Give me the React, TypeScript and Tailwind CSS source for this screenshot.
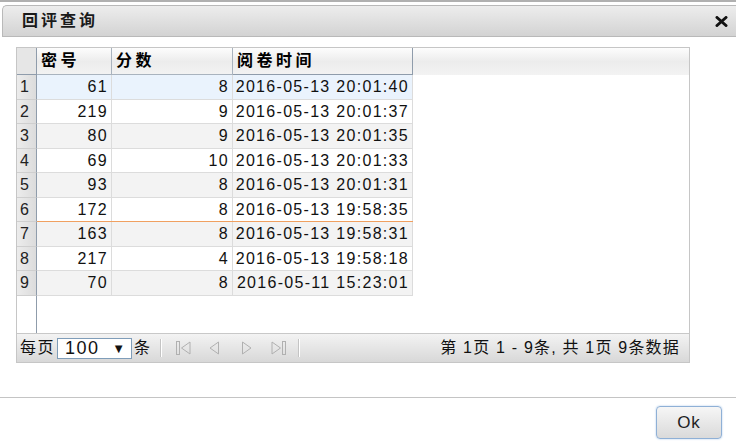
import React from 'react';

const rows = [
  { id: 61, score: 8, time: '2016-05-13 20:01:40' },
  { id: 219, score: 9, time: '2016-05-13 20:01:37' },
  { id: 80, score: 9, time: '2016-05-13 20:01:35' },
  { id: 69, score: 10, time: '2016-05-13 20:01:33' },
  { id: 93, score: 8, time: '2016-05-13 20:01:31' },
  { id: 172, score: 8, time: '2016-05-13 19:58:35' },
  { id: 163, score: 8, time: '2016-05-13 19:58:31' },
  { id: 217, score: 4, time: '2016-05-13 19:58:18' },
  { id: 70, score: 8, time: '2016-05-11 15:23:01' },
];

function CloseIcon() {
  return (
    <svg width="13" height="11" viewBox="0 0 13 11">
      <path d="M2 1.5 L11 9.5 M11 1.5 L2 9.5" stroke="#111" strokeWidth="3" strokeLinecap="round" />
    </svg>
  );
}

function PagerIcon({ kind }: { kind: 'first' | 'prev' | 'next' | 'last' }) {
  const c = '#b0b0b0';
  if (kind === 'first')
    return (
      <svg width="15" height="14" viewBox="0 0 15 14">
        <rect x="0.5" y="0.5" width="3" height="13" fill="none" stroke={c} />
        <path d="M14 1 L5.5 7 L14 13 Z" fill="none" stroke={c} />
      </svg>
    );
  if (kind === 'last')
    return (
      <svg width="15" height="14" viewBox="0 0 15 14">
        <path d="M1 1 L9.5 7 L1 13 Z" fill="none" stroke={c} />
        <rect x="11.5" y="0.5" width="3" height="13" fill="none" stroke={c} />
      </svg>
    );
  if (kind === 'prev')
    return (
      <svg width="10" height="14" viewBox="0 0 10 14">
        <path d="M9.5 1 L1 7 L9.5 13 Z" fill="none" stroke={c} />
      </svg>
    );
  return (
    <svg width="10" height="14" viewBox="0 0 10 14">
      <path d="M0.5 1 L9 7 L0.5 13 Z" fill="none" stroke={c} />
    </svg>
  );
}

function Sep() {
  return <div className="w-[2px] h-[18px] border-l border-[#c4c4c4] border-r border-r-white" />;
}

export default function App() {
  return (
    <div className="w-[736px] h-[441px] overflow-hidden bg-white text-black font-['Liberation_Sans','Noto_Sans_CJK_SC',sans-serif]">
      <div className="h-[2px] bg-[#b0b0b0]" />

      {/* title bar */}
      <div className="mt-[3px] ml-[2px] h-[32px] flex items-center justify-between pl-[19px] pr-[8px] rounded-tl-[5px] border border-r-0 border-[#b9b9b9] bg-gradient-to-b from-[#ededed] to-[#d3d3d3]">
        <span className="text-[16px] font-bold tracking-[3px] text-[#1a1a1a]">回评查询</span>
        <CloseIcon />
      </div>

      {/* grid */}
      <div className="mt-[10px] ml-[16px] w-[674px] h-[316px] flex flex-col border border-[#c6c6c6]">
        <div className="h-[27px] flex bg-gradient-to-b from-[#fdfdfd] via-[#ececec] to-[#f3f3f3] shrink-0">
          <div className="w-[20px] border-r border-b border-[#8f9cab] bg-[#e6e6e6]" />
          <div className="w-[75px] border-r border-b border-[#a9b3be] pl-[4px] leading-[26px] text-[16px] font-bold tracking-[3.5px]">密号</div>
          <div className="w-[121px] border-r border-b border-[#a9b3be] pl-[4px] leading-[26px] text-[16px] font-bold tracking-[3.5px]">分数</div>
          <div className="w-[180px] border-r border-b border-[#8f9cab] pl-[4px] leading-[26px] text-[16px] font-bold tracking-[3.5px]">阅卷时间</div>
          <div className="flex-1" />
        </div>

        <div className="flex flex-col text-[16px] tracking-[1.3px] text-[#111]">
          {rows.map((r, i) => {
            const bg = i === 0 ? 'bg-[#eaf3fd]' : i % 2 === 0 ? 'bg-[#f3f3f3]' : 'bg-white';
            const line = i === 5 ? 'border-b-[#f0a060]' : 'border-b-[#dcdcdc]';
            return (
              <div key={r.id} className="flex h-[24.5px]">
                <div className="w-[20px] shrink-0 pl-[3px] leading-[24px] border-r border-[#8f9cab] border-b border-b-[#cfcfcf] bg-gradient-to-r from-[#ececec] to-[#dcdcdc] text-[#222]">
                  {i + 1}
                </div>
                <div className={`flex border-b ${line} ${bg}`}>
                  <div className="w-[75px] pr-[3px] text-right leading-[23px] border-r border-[#dcdcdc]">{r.id}</div>
                  <div className="w-[121px] pr-[3px] text-right leading-[23px] border-r border-[#dcdcdc]">{r.score}</div>
                  <div className="w-[180px] pr-[3px] text-right leading-[23px] border-r border-[#dcdcdc]">{r.time}</div>
                </div>
              </div>
            );
          })}
        </div>

        <div className="flex-1 flex">
          <div className="w-[20px] border-r border-[#8f9cab]" />
        </div>

        {/* pager */}
        <div className="h-[29px] shrink-0 flex items-center border-t border-[#c8c8c8] bg-gradient-to-b from-[#f3f3f3] to-[#d8d8d8] pl-[3px] pr-[9px] text-[16px] text-[#111]">
          <span className="tracking-[1.5px]">每页</span>
          <div className="ml-[2px] w-[75px] h-[21px] flex items-center justify-between border border-[#7f9db9] bg-white pl-[7px] pr-[6px]">
            <span className="text-[18px] tracking-[1.5px] leading-none">100</span>
            <span className="text-[13px] leading-none">▼</span>
          </div>
          <span className="ml-[2px]">条</span>
          <div className="ml-[10px]"><Sep /></div>
          <div className="ml-[14px]"><PagerIcon kind="first" /></div>
          <div className="ml-[18px]"><PagerIcon kind="prev" /></div>
          <div className="ml-[23px]"><PagerIcon kind="next" /></div>
          <div className="ml-[19px]"><PagerIcon kind="last" /></div>
          <div className="ml-[12px]"><Sep /></div>
          <span className="ml-auto tracking-[1.2px]">第 1页 1 - 9条, 共 1页 9条数据</span>
        </div>
      </div>

      {/* footer */}
      <div className="mt-[34px] h-px bg-[#c4c4c4]" />
      <div className="flex justify-end pr-[14px] pt-[8px]">
        <button className="w-[66px] h-[33px] rounded-[4px] border border-[#8fb0d6] shadow-[0_0_2px_#a8c6e8] bg-gradient-to-b from-[#f6f6f6] to-[#dadada] text-[17px] tracking-[1px] text-[#222]">
          Ok
        </button>
      </div>
    </div>
  );
}
